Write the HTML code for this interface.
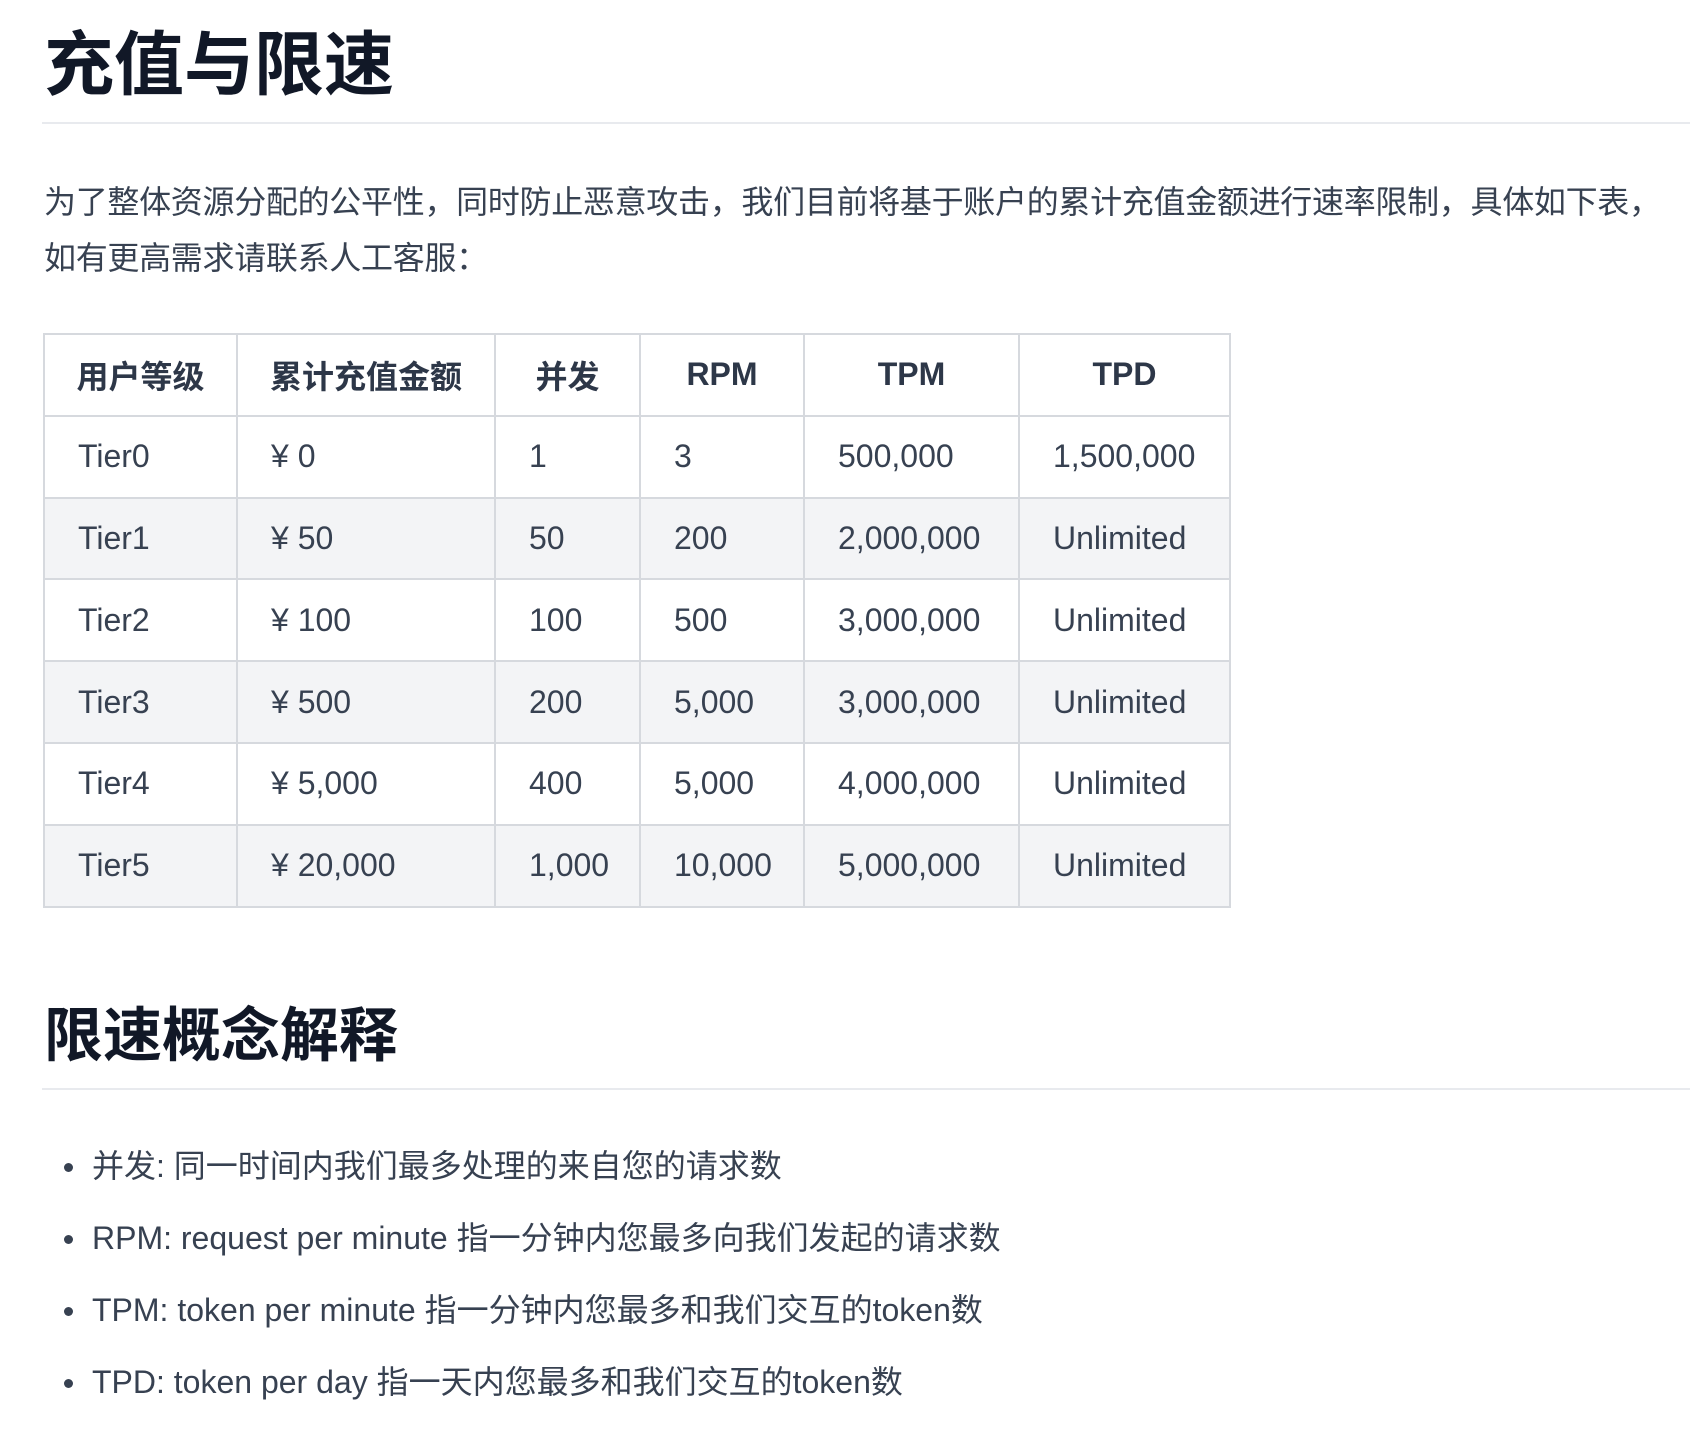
<!DOCTYPE html>
<html><head><meta charset="utf-8"><style>
*{margin:0;padding:0;box-sizing:border-box}
body{width:1700px;height:1440px;background:#fff;position:relative;overflow:hidden;font-family:"Liberation Sans","Noto Sans CJK SC",sans-serif;color:#374151}
.h{position:absolute;left:44px;font-weight:bold;color:#111827;white-space:nowrap}
.hr{position:absolute;left:42px;width:1648px;height:2px;background:#e8eaee}
.p{position:absolute;left:44px;top:174px;font-size:32px;line-height:56px;width:1660px;letter-spacing:-0.3px}
table{position:absolute;left:43px;top:333px;border-collapse:collapse;font-size:32px}
td,th{border:2px solid #d6d9de;height:81.8px;padding:0 0 0 33px;text-align:left;font-weight:normal;white-space:nowrap;color:#374151}
th{font-weight:bold;text-align:center;padding:0;color:#2d3748}
tr:nth-child(odd) td{background:#f3f4f6}
tr:first-child td{background:#fff}
ul{position:absolute;left:0;top:0;list-style:none}
li{position:absolute;left:92px;font-size:32px;white-space:nowrap;line-height:40px}
li:before{content:"";position:absolute;left:-28px;top:17px;width:9px;height:9px;border-radius:50%;background:#374151}
</style></head><body>
<div class="h" style="top:20px;font-size:70px;line-height:90px">充值与限速</div>
<div class="hr" style="top:122px"></div>
<div class="p">为了整体资源分配的公平性，同时防止恶意攻击，我们目前将基于账户的累计充值金额进行速率限制，具体如下表，<br>如有更高需求请联系人工客服：</div>
<table>
<tr><th style="width:193px">用户等级</th><th style="width:258px">累计充值金额</th><th style="width:145px">并发</th><th style="width:164px">RPM</th><th style="width:215px">TPM</th><th style="width:211px">TPD</th></tr>
<tr><td>Tier0</td><td>¥ 0</td><td>1</td><td>3</td><td>500,000</td><td>1,500,000</td></tr>
<tr><td>Tier1</td><td>¥ 50</td><td>50</td><td>200</td><td>2,000,000</td><td>Unlimited</td></tr>
<tr><td>Tier2</td><td>¥ 100</td><td>100</td><td>500</td><td>3,000,000</td><td>Unlimited</td></tr>
<tr><td>Tier3</td><td>¥ 500</td><td>200</td><td>5,000</td><td>3,000,000</td><td>Unlimited</td></tr>
<tr><td>Tier4</td><td>¥ 5,000</td><td>400</td><td>5,000</td><td>4,000,000</td><td>Unlimited</td></tr>
<tr><td>Tier5</td><td>¥ 20,000</td><td>1,000</td><td>10,000</td><td>5,000,000</td><td>Unlimited</td></tr>
</table>
<div class="h" style="top:998px;font-size:59px;line-height:76px">限速概念解释</div>
<div class="hr" style="top:1088px"></div>
<ul>
<li style="top:1146px">并发: 同一时间内我们最多处理的来自您的请求数</li>
<li style="top:1218px">RPM: request per minute 指一分钟内您最多向我们发起的请求数</li>
<li style="top:1290px">TPM: token per minute 指一分钟内您最多和我们交互的token数</li>
<li style="top:1362px">TPD: token per day 指一天内您最多和我们交互的token数</li>
</ul>
</body></html>
